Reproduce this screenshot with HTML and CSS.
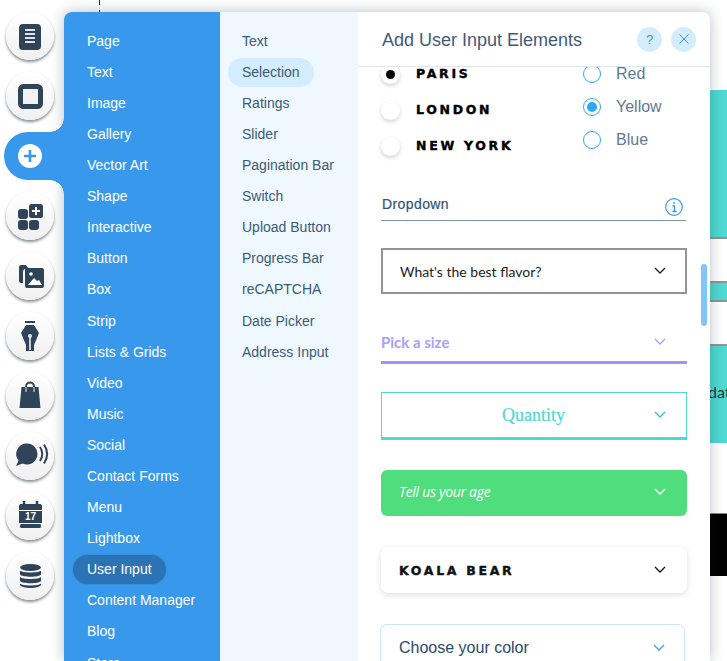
FILE: index.html
```html
<!DOCTYPE html>
<html lang="en">
<head>
    <meta charset="UTF-8">
    <meta name="viewport" content="width=device-width, initial-scale=1.0">
    <title>Add User Input Elements</title>
    <link rel="stylesheet" href="styles.css">
</head>
<body>
    <div class="guide"></div>

    <nav class="rail">
        <div class="rail-btn">
            <svg viewBox="0 0 48 48"><rect x="13" y="12" width="22" height="26" rx="4" fill="#2f4459"/><path d="M19 18h10M19 22h10M19 26h10M19 30h10" stroke="#dfe3e7" stroke-width="2"/></svg>
        </div>
        <div class="rail-btn">
            <svg viewBox="0 0 48 48"><rect x="14.5" y="14.5" width="20" height="20" rx="3" fill="#f1f1f1" stroke="#2f4459" stroke-width="5"/></svg>
        </div>
        <div class="rail-tab">
            <svg class="add-icon" viewBox="0 0 24 24"><circle cx="12" cy="12" r="12" fill="#fff"/><path d="M12 6v12M6 12h12" stroke="#3899ec" stroke-width="2.6"/></svg>
        </div>
        <div class="rail-btn">
            <svg viewBox="0 0 48 48"><g fill="#2f4459"><rect x="12" y="17" width="10" height="10" rx="3"/><rect x="12" y="28" width="10" height="10" rx="3"/><rect x="23" y="28" width="10" height="10" rx="3"/><rect x="23" y="12" width="14" height="14" rx="2.5"/></g><path d="M30 15v8M26 19h8" stroke="#fff" stroke-width="2"/></svg>
        </div>
        <div class="rail-btn">
            <svg viewBox="0 0 48 48"><path d="M13 15a2 2 0 0 1 2-2h5l2 3h9v1H20a3 3 0 0 0-3 3v11h-2a2 2 0 0 1-2-2z" fill="#2f4459"/><rect x="19" y="16" width="19" height="20" rx="2" fill="#2f4459"/><circle cx="25" cy="22" r="1.8" fill="#fff"/><path d="M22 33l6-7 3 3 2-1 3 5z" fill="#fff"/></svg>
        </div>
        <div class="rail-btn">
            <svg viewBox="0 0 48 48"><rect x="19" y="9" width="10" height="2" fill="#2f4459"/><path d="M20 13h8l5 8-5 12v6h-8v-6l-5-12z" fill="#2f4459"/><path d="M24 25v13" stroke="#c9ced3" stroke-width="2"/><circle cx="24" cy="24" r="2" fill="#e4e7ea"/></svg>
        </div>
        <div class="rail-btn">
            <svg viewBox="0 0 48 48"><path d="M15.500 15h17L34.500 36h-21z" fill="#2f4459"/><path d="M20 20v-5.500a4 4 0 0 1 8 0V20" fill="none" stroke="#2f4459" stroke-width="2"/><path d="M20 15v5M28 15v5" stroke="#e9ebed" stroke-width="1"/></svg>
        </div>
        <div class="rail-btn">
            <svg viewBox="0 0 48 48"><path d="M21 11.500a10.500 10.500 0 1 1-4.500 20L10 34l2.500-5.500A10.500 10.500 0 0 1 21 11.500z" fill="#2f4459"/><path d="M34 15c3 4 3 10 0 14M38 12.500c4 6 4 13 0 19" fill="none" stroke="#2f4459" stroke-width="2"/></svg>
        </div>
        <div class="rail-btn">
            <svg viewBox="0 0 48 48"><path d="M15 12h19a2 2 0 0 1 2 2v17H13V14a2 2 0 0 1 2-2z" fill="#2f4459"/><path d="M18 9v5M31 9v5" stroke="#2f4459" stroke-width="2.5"/><path d="M12 18.500h25" stroke="#fff" stroke-width="1"/><rect x="14" y="32" width="21" height="4" rx="1.5" fill="#2f4459"/><text x="24.500" y="28" class="cal-day">17</text></svg>
        </div>
        <div class="rail-btn">
            <svg viewBox="0 0 48 48"><g fill="#2f4459"><ellipse cx="24.500" cy="15.500" rx="10.500" ry="3.500"/><path d="M14 18.500c2 2.600 19 2.600 21 0v4c-2 3-19 3-21 0z"/><path d="M14 25c2 2.600 19 2.600 21 0v4c-2 3-19 3-21 0z"/><path d="M14 31.500c2 2.600 19 2.600 21 0v1.500c-2 4-19 4-21 0z"/></g></svg>
        </div>
    </nav>

    <div class="panel">
        <ul class="cats">
            <li>Page</li>
            <li>Text</li>
            <li>Image</li>
            <li>Gallery</li>
            <li>Vector Art</li>
            <li>Shape</li>
            <li>Interactive</li>
            <li>Button</li>
            <li>Box</li>
            <li>Strip</li>
            <li>Lists &amp; Grids</li>
            <li>Video</li>
            <li>Music</li>
            <li>Social</li>
            <li>Contact Forms</li>
            <li>Menu</li>
            <li>Lightbox</li>
            <li class="active">User Input</li>
            <li>Content Manager</li>
            <li>Blog</li>
            <li>Store</li>
        </ul>

        <ul class="subcats">
            <li>Text</li>
            <li class="active">Selection</li>
            <li>Ratings</li>
            <li>Slider</li>
            <li>Pagination Bar</li>
            <li>Switch</li>
            <li>Upload Button</li>
            <li>Progress Bar</li>
            <li>reCAPTCHA</li>
            <li>Date Picker</li>
            <li>Address Input</li>
        </ul>

        <section class="content">
            <header class="content-head">
                <h2>Add User Input Elements</h2>
                <button class="head-btn">?</button>
                <button class="head-btn">
                    <svg viewBox="0 0 12 12" width="12" height="12"><path d="M1.500 1.500l9 9M10.500 1.500l-9 9" stroke="#3899ec" stroke-width="1"/></svg>
                </button>
            </header>

            <div class="scroller">
                <div class="radios">
                    <div class="radio-col-a">
                        <div class="heavy-row"><span class="soft-dot on"></span><span class="heavy">PARIS</span></div>
                        <div class="heavy-row"><span class="soft-dot"></span><span class="heavy">LONDON</span></div>
                        <div class="heavy-row"><span class="soft-dot"></span><span class="heavy">NEW YORK</span></div>
                    </div>
                    <div class="radio-col-b">
                        <div class="thin-row"><span class="ring"></span>Red</div>
                        <div class="thin-row"><span class="ring on"></span>Yellow</div>
                        <div class="thin-row"><span class="ring"></span>Blue</div>
                    </div>
                </div>

                <div class="section-title">
                    <span>Dropdown</span>
                    <svg viewBox="0 0 18 18" width="18" height="18"><circle cx="9" cy="9" r="8.300" fill="none" stroke="#3899ec" stroke-width="1.200"/><path d="M9 4v2M7.500 8H9.500V13M7.300 13.500h4.400" fill="none" stroke="#3899ec" stroke-width="1.300"/></svg>
                </div>

                <div class="dd dd-gray">What's the best flavor?<svg class="chev" viewBox="0 0 12 8"><path d="M1 1l5 5 5-5" /></svg></div>
                <div class="dd dd-violet">Pick a size<svg class="chev" viewBox="0 0 12 8"><path d="M1 1l5 5 5-5" /></svg></div>
                <div class="dd dd-teal"><span class="dd-center">Quantity</span><svg class="chev" viewBox="0 0 12 8"><path d="M1 1l5 5 5-5" /></svg></div>
                <div class="dd dd-green">Tell us your age<svg class="chev" viewBox="0 0 12 8"><path d="M1 1l5 5 5-5" /></svg></div>
                <div class="dd dd-card">KOALA BEAR<svg class="chev" viewBox="0 0 12 8"><path d="M1 1l5 5 5-5" /></svg></div>
                <div class="dd dd-outline">Choose your color<svg class="chev" viewBox="0 0 12 8"><path d="M1 1l5 5 5-5" /></svg></div>
            </div>

            <div class="scroll-thumb"></div>
        </section>
    </div>

    <div class="canvas">
        <div class="strip teal s1"></div>
        <div class="strip white s2"></div>
        <div class="strip teal s3"></div>
        <div class="strip white s4"></div>
        <div class="strip teal s5"><span class="canvas-text">date</span></div>
        <div class="strip white s6"></div>
        <div class="strip black s7"></div>
    </div>
</body>
</html>
```

FILE: styles.css
```css
* {
    box-sizing: border-box;
}
body {
    margin: 0;
    height: 661px;
    overflow: hidden;
    display: flex;
    align-items: flex-start;
    background: #fff;
    font-family: 'Liberation Sans', Arial, sans-serif;
}
ul {
    list-style: none;
    margin: 0;
}

/* dashed guide above the panel */
.guide {
    position: absolute;
    left: 99px;
    top: 0;
    width: 1px;
    height: 12px;
    background: repeating-linear-gradient(#162d3d 0 5px, transparent 5px 10px);
}

/* left rail */
.rail {
    width: 64px;
    flex: none;
    padding-top: 12px;
    position: relative;
    z-index: 3;
}
.rail-btn {
    width: 48px;
    height: 48px;
    margin: 0 0 12px 6px;
    border-radius: 50%;
    background: linear-gradient(#fff, #f0f0f0);
    box-shadow: 0 2px 3px rgba(22, 45, 61, 0.55);
}
.rail-btn svg {
    display: block;
    width: 48px;
    height: 48px;
}
.cal-day {
    font-family: 'Liberation Sans', Arial, sans-serif;
    font-size: 10px;
    font-weight: bold;
    fill: #fff;
    text-anchor: middle;
}
.rail-tab {
    width: 60px;
    height: 48px;
    margin: 0 0 12px 4px;
    border-radius: 24px 0 0 24px;
    background: #3899ec;
    display: flex;
    align-items: center;
    padding-left: 14px;
    position: relative;
}
.rail-tab::before,
.rail-tab::after {
    content: "";
    position: absolute;
    right: 0;
    width: 14px;
    height: 14px;
}
.rail-tab::before {
    top: -14px;
    background: radial-gradient(circle at 0 0, transparent 13.500px, #3899ec 14px);
}
.rail-tab::after {
    bottom: -14px;
    background: radial-gradient(circle at 0 100%, transparent 13.500px, #3899ec 14px);
}
.add-icon {
    width: 24px;
    height: 24px;
}

/* the add panel */
.panel {
    width: 646px;
    height: 649px;
    flex: none;
    margin-top: 12px;
    display: flex;
    border-radius: 8px 8px 0 0;
    overflow: hidden;
    box-shadow: 0 0 14px rgba(22, 45, 61, 0.3);
    position: relative;
    z-index: 2;
    background: #fff;
}
.cats,
.subcats {
    flex: none;
    height: 100%;
    padding: 14.680px 0 0 9px;
    display: flex;
    flex-direction: column;
    gap: 2px;
    font-size: 14px;
}
.cats {
    width: 156px;
    background: #3899ec;
    color: #fff;
}
.subcats {
    width: 138px;
    padding-left: 8px;
    background: #f0f8ff;
    color: #3b5a78;
}
.cats li,
.subcats li {
    flex: none;
    width: fit-content;
    height: 29.100px;
    line-height: 29px;
    padding: 0 14px;
    border-radius: 15px;
}
.cats li.active {
    background: #2b73b4;
    box-shadow: 0 0 2px rgba(22, 45, 61, 0.25);
}
.subcats li.active {
    background: #d3edff;
}

.content {
    width: 352px;
    flex: none;
    position: relative;
    display: flex;
    flex-direction: column;
}
.content-head {
    height: 55px;
    flex: none;
    display: flex;
    align-items: center;
    gap: 9px;
    padding: 1px 14px 1px 24px;
    border-bottom: 1px solid #dfe7ee;
}
.content-head h2 {
    margin: 2px auto 0 0;
    font-size: 18px;
    font-weight: normal;
    color: #3f5b78;
}
.head-btn {
    width: 25px;
    height: 25px;
    padding: 0;
    border: none;
    border-radius: 50%;
    background: #d3edff;
    color: #3899ec;
    font-family: 'Liberation Sans', Arial, sans-serif;
    font-size: 13px;
    display: flex;
    align-items: center;
    justify-content: center;
}

.scroller {
    flex: 1;
    overflow: hidden;
    padding: 0 23px;
}
.radios {
    display: flex;
    height: 112px;
    margin-top: -3px;
}
.radio-col-a {
    width: 200px;
}
.heavy-row {
    display: flex;
    align-items: center;
    gap: 16px;
    height: 36px;
    margin-top: -8px;
    margin-bottom: 8px;
}
.soft-dot {
    width: 19px;
    height: 19px;
    border-radius: 50%;
    background: #fff;
    box-shadow: 0 2px 4px rgba(0, 0, 0, 0.18);
    display: flex;
    align-items: center;
    justify-content: center;
}
.soft-dot.on::before {
    content: "";
    width: 9px;
    height: 9px;
    border-radius: 50%;
    background: #000;
}
.heavy {
    margin-top: -1px;
    font-family: 'DejaVu Sans', sans-serif;
    font-weight: bold;
    font-size: 12.500px;
    letter-spacing: 2.700px;
    -webkit-text-stroke: 0.400px currentColor;
    color: #000;
}
.radio-col-b {
    margin-left: 2px;
    margin-top: -7px;
}
.thin-row {
    display: flex;
    align-items: center;
    gap: 15px;
    height: 33px;
    font-size: 16px;
    color: #607a93;
}
.ring {
    width: 18px;
    height: 18px;
    border-radius: 50%;
    border: 1px solid #2fa8f5;
    background: #fff;
    display: flex;
    align-items: center;
    justify-content: center;
}
.ring.on::before {
    content: "";
    width: 10px;
    height: 10px;
    border-radius: 50%;
    background: #2fa8f5;
}

.section-title {
    height: 31px;
    margin-top: 14px;
    margin-right: 1px;
    padding: 0 3px 0 1px;
    display: flex;
    align-items: flex-start;
    justify-content: space-between;
    border-bottom: 1px solid #7a94a8;
    font-size: 14px;
    letter-spacing: 0.400px;
    -webkit-text-stroke: 0.200px currentColor;
    color: #2f5573;
}
.section-title span {
    padding-top: 6px;
}
.section-title svg {
    margin-top: 8px;
}

.dd {
    width: 306px;
    height: 46px;
    display: flex;
    align-items: center;
    justify-content: space-between;
    padding: 0 20px;
    position: relative;
}
.chev {
    width: 12px;
    height: 8px;
    flex: none;
    margin-right: 1px;
    fill: none;
    stroke: currentColor;
    stroke-width: 1.300;
}
.dd-gray {
    margin-top: 27px;
    border: 2.500px solid #949494;
    padding: 0 18px 0 17px;
    font-family: 'Lato', sans-serif;
    font-size: 14px;
    color: #1d1d1d;
}
.dd-violet {
    margin-top: 28px;
    height: 42px;
    padding: 0 20px 0 0;
    border-bottom: 3px solid #9f93ff;
    font-family: 'Lato', sans-serif;
    font-weight: bold;
    font-size: 15px;
    color: #a99eff;
}
.dd-teal {
    margin-top: 28px;
    height: 48px;
    border: 1px solid #4fd9d2;
    border-bottom-width: 3px;
    padding: 0 19px 0 0;
    font-family: 'Liberation Serif', serif;
    font-size: 18px;
    -webkit-text-stroke: 0.200px currentColor;
    color: #4fd9d2;
}
.dd-center {
    flex: 1;
    text-align: center;
    padding-left: 31px;
}
.dd-teal .chev {
    color: #2ec4bc;
}
.dd-green {
    margin-top: 30px;
    background: #4fdd7e;
    border-radius: 6px;
    padding: 0 20px 3px 18px;
    font-family: 'Open Sans', sans-serif;
    font-style: italic;
    font-size: 14px;
    letter-spacing: -0.300px;
    color: #fff;
}
.dd-card {
    margin-top: 31px;
    background: #fff;
    border-radius: 7px;
    box-shadow: 0 2px 6px rgba(0, 0, 0, 0.13);
    padding: 0 20px 0 18px;
    font-family: 'DejaVu Sans', sans-serif;
    font-weight: bold;
    font-size: 12.500px;
    letter-spacing: 2.700px;
    -webkit-text-stroke: 0.400px currentColor;
    color: #111;
}
.dd-outline {
    width: 305px;
    margin-top: 31px;
    margin-left: -1px;
    height: 60px;
    border: 1px solid #c7e5fb;
    border-radius: 7px;
    padding: 0 18px 12px 18px;
    font-size: 16px;
    color: #2b4a6b;
}
.dd-outline .chev {
    color: #2fa8f5;
}
.scroll-thumb {
    position: absolute;
    left: 343px;
    top: 252px;
    width: 6px;
    height: 62px;
    border-radius: 3px;
    background: #80c6f9;
}

/* page behind the panel */
.canvas {
    width: 17px;
    flex: none;
    padding-top: 90px;
    position: relative;
    z-index: 1;
}
.strip {
    border-bottom: 2px solid #949494;
}
.teal {
    background: #4fd9d2;
}
.white {
    background: #fff;
}
.s1 {
    height: 149px;
}
.s2 {
    height: 44px;
}
.s3 {
    height: 19px;
}
.s4 {
    height: 44px;
}
.s5 {
    height: 97px;
    border-bottom: none;
    color: #1d3a3a;
    font-family: 'Lato', sans-serif;
    font-size: 16px;
    line-height: 92px;
    white-space: nowrap;
}
.canvas-text {
    margin-left: -2px;
}
.s6 {
    height: 70px;
    border-bottom: none;
}
.s7 {
    height: 63px;
    background: #000;
    border-top: 1px solid #3899ec;
    border-bottom: none;
}
```
